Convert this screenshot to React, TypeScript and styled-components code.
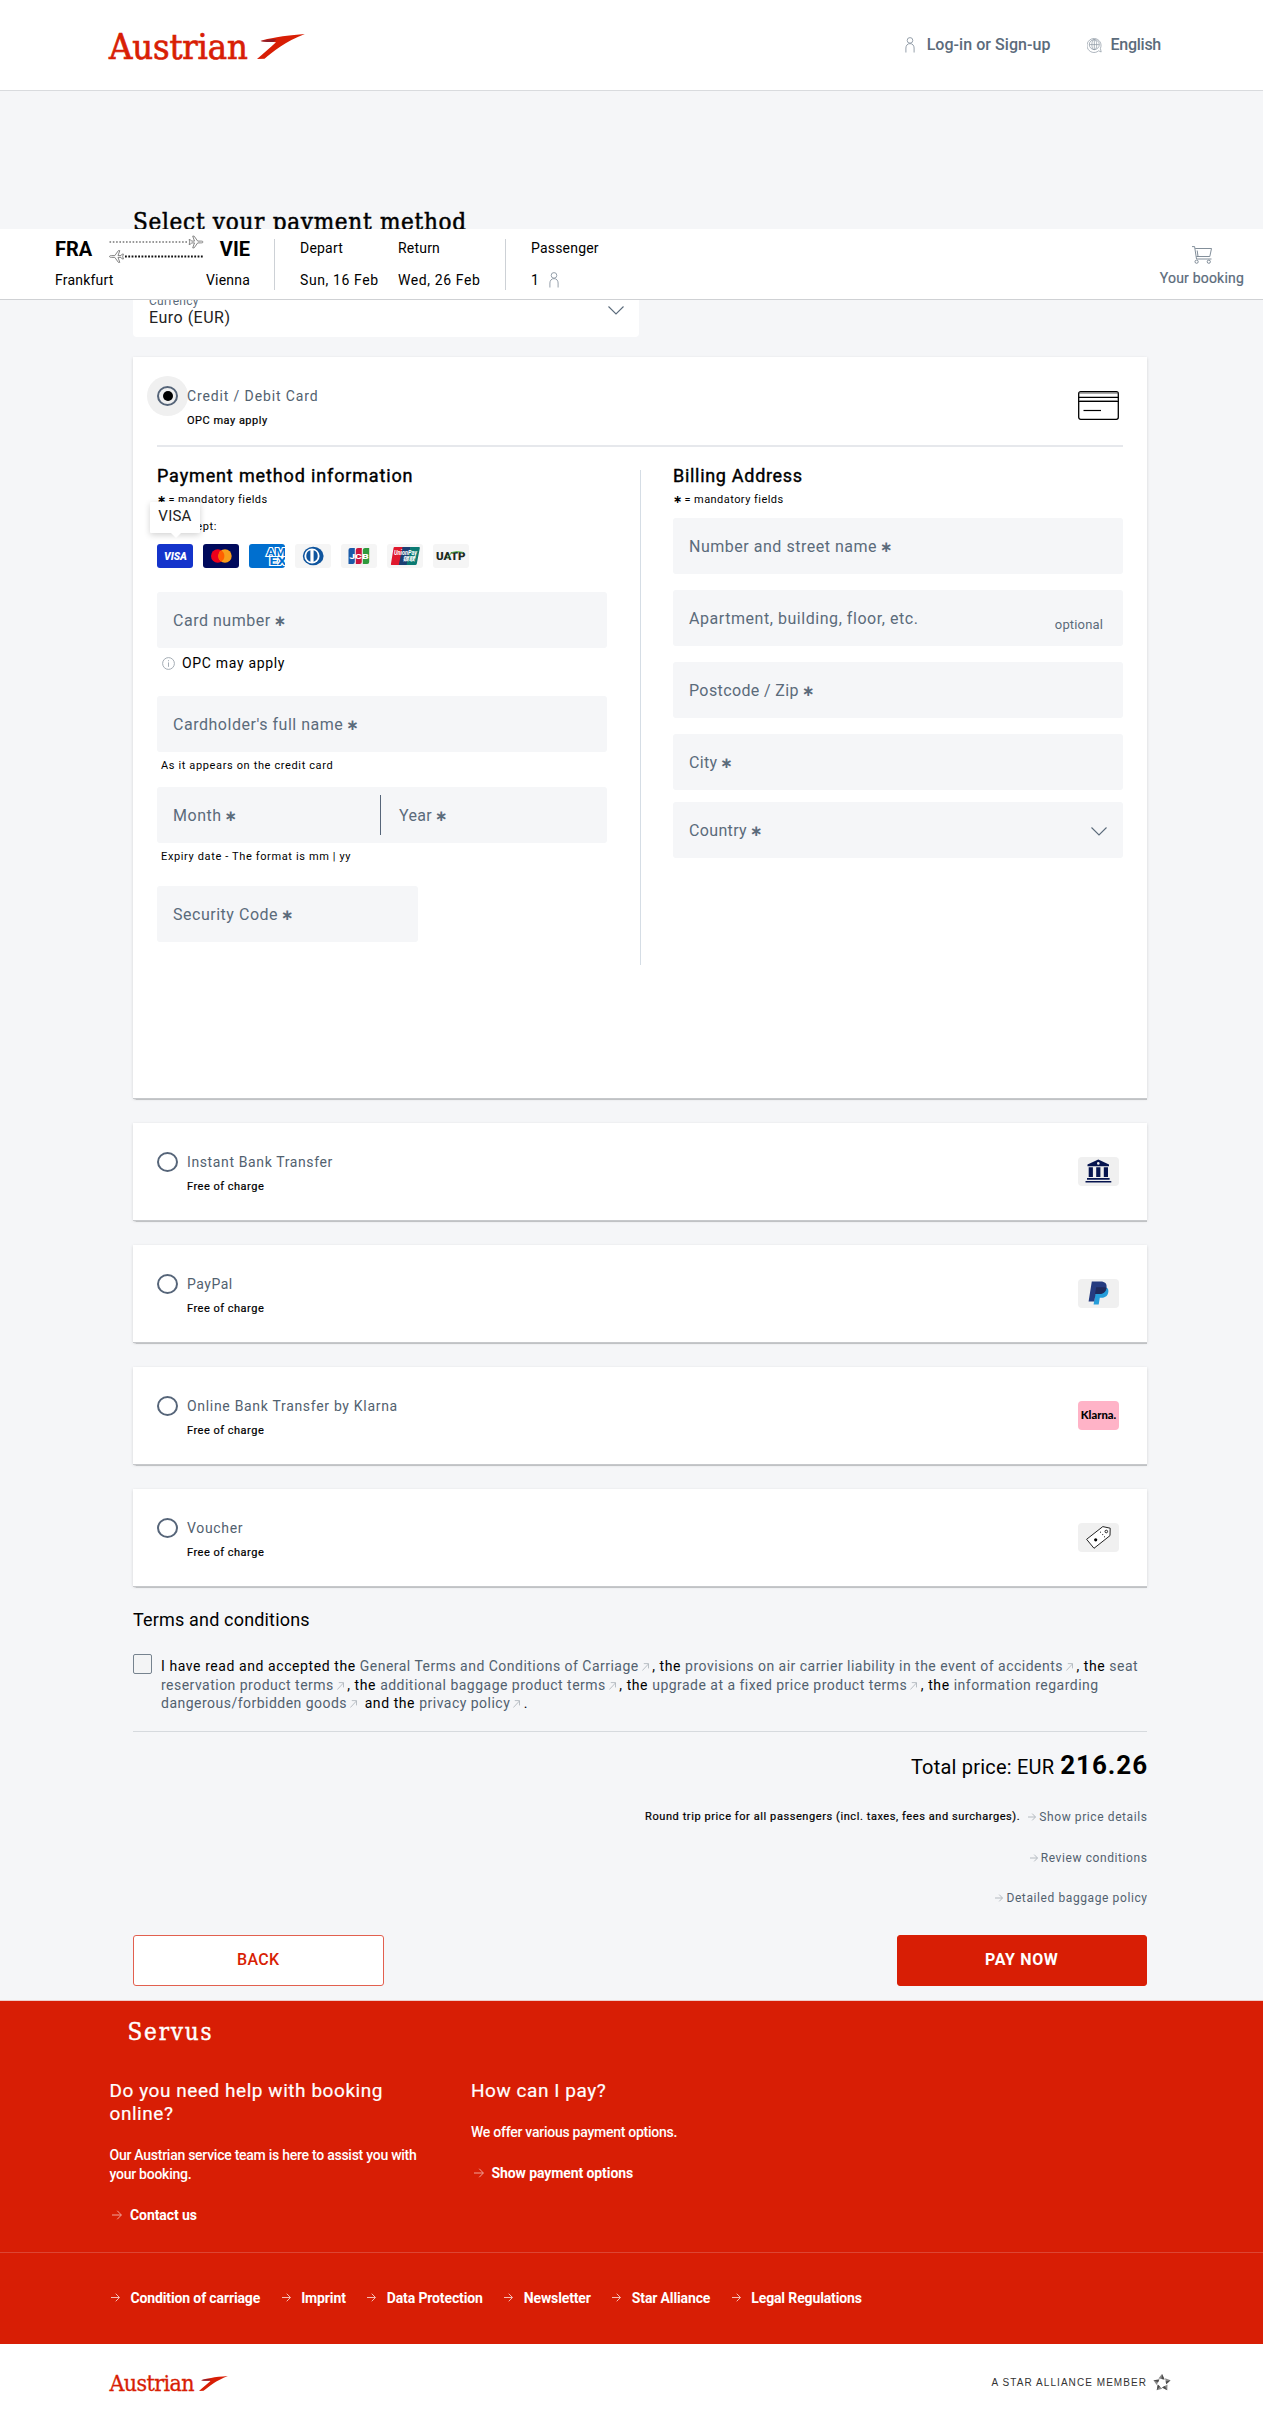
import React from 'react';
import styled, { createGlobalStyle, css } from 'styled-components';

const slate = '#5b6b7b';
const red = '#d81e05';
const sans = "Roboto, 'Noto Sans', sans-serif";
const serif = "'DejaVu Serif Condensed', 'DejaVu Serif', serif";

const type = (size: number, line: number, spacing = 0, weight = 400) => css`
  font-size: ${size}px;
  line-height: ${line}px;
  letter-spacing: ${spacing}px;
  font-weight: ${weight};
`;

const Global = createGlobalStyle`
  *, *::before, *::after { box-sizing: border-box; }
  body { margin: 0; background: #f5f6f8; }
  h1, h2, h3, p { margin: 0; }
  button { font-family: inherit; }
`;

const Page = styled.div`
  position: relative;
  width: 1263px;
  font-family: ${sans};
  color: #000;
  white-space: nowrap;
`;

/* ---------- brand ---------- */

const Brand = styled.div<{ $small?: boolean }>`
  display: flex;
  align-items: flex-start;
  gap: ${p => (p.$small ? 5 : 9)}px;
  color: ${red};
  font-family: ${serif};
  -webkit-text-stroke: ${p => (p.$small ? 0.3 : 0.7)}px ${red};
  ${p => (p.$small ? type(23, 30, -0.62) : type(36, 40, -0.15))}
  svg { margin-top: ${p => (p.$small ? 8 : 7)}px; }
`;

const Swoosh = ({ w, h }: { w: number; h: number }) => (
  <svg width={w} height={h} viewBox="0 0 48 25" preserveAspectRatio="none">
    <path
      d="M3.5 7C11 4.600 25 1.600 47.800 0C38 4 30 8 23.500 12.500C17 17 11.500 21.500 7.500 24.700L0 25C6 19.500 13 14 19 8.200C15 7.600 9 8.600 3.500 7Z"
      fill={red}
    />
    <path d="M3.500 7C9 5.400 14 5 19.500 5.200L16.500 8C12 7.800 8 8.400 3.500 7Z" fill="#7b1c33" opacity=".75" />
  </svg>
);

const Header = styled.header`
  display: flex;
  align-items: flex-start;
  height: 91px;
  padding: 27px 102px 0 109px;
  background: #fff;
  border-bottom: 1px solid #d9dbde;
`;

const HeaderNav = styled.nav`
  display: flex;
  margin: 8px 0 0 auto;
  gap: 37px;
`;

const NavItem = styled.a<{ $gap: number; $ls: number }>`
  display: flex;
  align-items: center;
  gap: ${p => p.$gap}px;
  color: ${slate};
  ${type(16, 20, 0, 500)}
  letter-spacing: ${p => p.$ls}px;
`;

const Person = ({ w = 10, h = 16 }: { w?: number; h?: number }) => (
  <svg width={w} height={h} viewBox="0 0 10 16" fill="none" stroke="#8a95a1" strokeWidth=".9">
    <circle cx="5" cy="3.400" r="2.800" />
    <path d="M.9 15.500V11C.9 8.500 2.500 6.600 5 6.600S9.100 8.500 9.100 11V15.500" />
  </svg>
);

const Globe = () => (
  <svg width="15" height="16" viewBox="0 0 15 16" fill="none" stroke="#8a95a1" strokeWidth=".7">
    <path d="M14.200 15L11.600 13.800A7 7 0 1 1 13.400 11.400Z" />
    <circle cx="7.300" cy="7.600" r="5" />
    <ellipse cx="7.300" cy="7.600" rx="2.400" ry="5" />
    <path d="M7.300 2.600V12.600M2.300 7.600H12.300" />
  </svg>
);

/* ---------- booking bar ---------- */

const BookingBar = styled.section`
  position: absolute;
  z-index: 5;
  top: 229px;
  left: 0;
  width: 100%;
  height: 71px;
  display: flex;
  align-items: flex-start;
  padding: 0 19px 0 55px;
  background: #fff;
  border-bottom: 1px solid #cfd1d4;
`;

const Route = styled.div`
  width: 195px;
  padding-top: 8px;
`;

const RouteRow = styled.div`
  display: flex;
  align-items: center;
  justify-content: space-between;
  height: 24px;
`;

const Airport = styled.strong`
  ${type(20, 24, 0, 700)}
`;

const City = styled.span`
  margin-top: 13px;
  ${type(14, 20, 0.2)}
`;

const Divider = styled.div<{ $left: number }>`
  flex: none;
  width: 1px;
  height: 51px;
  margin: 10px 25px 0 ${p => p.$left}px;
  background: #cdd1d6;
`;

const Fact = styled.div<{ $w?: number }>`
  display: flex;
  flex-direction: column;
  gap: 12px;
  width: ${p => p.$w ?? 80}px;
  padding-top: 9px;
  ${type(14, 20, 0.2)}
`;

const Dates = styled.span`
  display: flex;
  align-items: center;
  gap: 10px;
  letter-spacing: 0.6px;
`;

const CartLink = styled.a`
  display: flex;
  flex-direction: column;
  align-items: center;
  gap: 4px;
  margin-left: auto;
  padding-top: 17px;
  color: ${slate};
  -webkit-text-stroke: 0.2px ${slate};
  ${type(14, 20, 0.2)}
`;

const planePath =
  'M14.500 6.500C14.500 5.700 13.300 5.600 12.300 5.600H9.200L5.600.6H4.200L6 5.600H3L1.700 4H.6L1.300 6.500L.6 9H1.700L3 7.400H6L4.200 12.400H5.600L9.200 7.400H12.300C13.300 7.400 14.500 7.300 14.500 6.500Z';

const Flights = () => (
  <svg width="96" height="28" viewBox="0 0 96 28" fill="none">
    <path d="M1.500 7H80" stroke="#777" strokeWidth="1.600" strokeDasharray="1.600 1.700" />
    <path d="M17 21.500H95" stroke="#111" strokeWidth="1.800" strokeDasharray="1.800 1.500" />
    <path d={planePath} stroke="#777" strokeWidth=".9" transform="translate(80.500 .5)" />
    <path d={planePath} stroke="#777" strokeWidth=".9" transform="translate(16 15) scale(-1 1)" />
  </svg>
);

const Cart = () => (
  <svg width="20" height="18" viewBox="0 0 20 18" fill="none" stroke="#75828f" strokeWidth=".9">
    <path d="M0 .6H2.600L4.500 13H19.500M3.200 2.500H19.500L17.800 10.500H4.400M5.200 4.500L6 10.500" />
    <circle cx="4.600" cy="15.700" r="1.600" />
    <circle cx="16.800" cy="15.700" r="1.600" />
  </svg>
);

/* ---------- main ---------- */

const Main = styled.main`
  width: 1014px;
  margin-left: 133px;
  padding: 115px 0 14px;
`;

const Title = styled.h1`
  font-family: ${serif};
  ${type(24, 32, 0.71)}
  -webkit-text-stroke: 0.5px #000;
`;

const Currency = styled.div`
  display: flex;
  align-items: center;
  justify-content: space-between;
  width: 506px;
  height: 56px;
  margin-top: 43px;
  padding: 3px 15px 0 16px;
  background: #fff;
  border-radius: 4px;
`;

const CurrencyLabel = styled.div`
  color: ${slate};
  ${type(12, 14, 0.3)}
`;

const CurrencyValue = styled.div`
  margin-top: 1px;
  color: #222;
  ${type(16, 18, 0.5)}
`;

const Chevron = () => (
  <svg width="16" height="9" viewBox="0 0 16 9" fill="none" stroke={slate} strokeWidth="1.100">
    <path d="M.5.5L8 8L15.500.5" />
  </svg>
);

const Panel = styled.section<{ $h: number; $mt: number }>`
  height: ${p => p.$h}px;
  margin-top: ${p => p.$mt}px;
  background: #fff;
  box-shadow: 0 1px 0 #c6c8cb, 0 2px 1px -0.5px #c0c2c4, 0 1px 3px rgba(0, 0, 0, 0.14);
`;

const PanelHead = styled.div`
  display: flex;
  align-items: flex-start;
  padding: 0 28px 0 24px;
  height: 88px;
`;

const Radio = styled.span<{ $on?: boolean }>`
  display: grid;
  place-items: center;
  flex: none;
  width: 21px;
  height: 20px;
  margin: 29px 9px 0 0;
  border: 2px solid #566579;
  border-radius: 50%;
  ${p =>
    p.$on &&
    css`
      box-shadow: 0 0 0 10px #f0f0f0;
      background: #f0f0f0;
      &::after {
        content: '';
        width: 10px;
        height: 10px;
        border-radius: 50%;
        background: #000;
      }
    `}
`;

const Method = styled.div`
  padding-top: 29px;
`;

const MethodName = styled.div<{ $ls?: number }>`
  color: #52616f;
  ${type(14, 20)}
  letter-spacing: ${p => p.$ls ?? 0.66}px;
`;

const MethodNote = styled.div`
  margin-top: 7px;
  ${type(11, 16, 0.5)}
  -webkit-text-stroke: 0.2px #000;
`;

const Badge = styled.span<{ $bg?: string }>`
  display: grid;
  place-items: center;
  width: 41px;
  height: 29px;
  margin: 34px 0 0 auto;
  border-radius: 4px;
  background: ${p => p.$bg ?? 'transparent'};
`;

const PanelBody = styled.div`
  display: grid;
  grid-template-columns: 450px 1px 450px;
  justify-content: space-between;
  margin: 0 24px;
  border-top: 2px solid #e6e8ec;
`;

const Column = styled.div`
  padding-top: 17px;
`;

const ColumnRule = styled.div`
  height: 495px;
  margin-top: 23px;
  background: #d5dde5;
`;

const SectionTitle = styled.h2<{ $ls: number }>`
  ${type(18, 24)}
  letter-spacing: ${p => p.$ls}px;
  -webkit-text-stroke: 0.4px #000;
`;

const Mandatory = styled.p<{ $mb?: number }>`
  margin: 4px 0 ${p => p.$mb ?? 0}px;
  ${type(11, 16, 0.45)}
`;

const Star = styled.span<{ $s: number }>`
  display: inline-block;
  font-family: 'DejaVu Sans', sans-serif;
  font-weight: 700;
  font-size: ${p => p.$s}px;
  line-height: 0;
  letter-spacing: -1px;
`;

const Accept = styled.p`
  margin-top: 11px;
  ${type(11, 16, 0.6)}
`;

const Logos = styled.div`
  position: relative;
  display: flex;
  gap: 10px;
  margin: 9px 0 24px;
  svg { display: block; border-radius: 3px; }
`;

const Tooltip = styled.span`
  position: absolute;
  left: -7px;
  bottom: 35px;
  width: 50px;
  height: 31px;
  text-align: center;
  background: #fff;
  color: #222;
  border-radius: 1px;
  box-shadow: 0 2px 6px rgba(0, 0, 0, 0.18);
  ${type(15, 29, 0.25)}
  &::after {
    content: '';
    position: absolute;
    left: 20px;
    bottom: -5px;
    border: 6px solid transparent;
    border-top-color: #fff;
    border-bottom: 0;
  }
`;

const Field = styled.div<{ $w?: number; $mb?: number; $ls?: number }>`
  display: flex;
  align-items: center;
  width: ${p => (p.$w ? p.$w + 'px' : '100%')};
  height: 56px;
  margin-bottom: ${p => p.$mb ?? 0}px;
  padding: 2px 16px 0;
  background: #f5f6f8;
  border-radius: 3px;
  color: ${slate};
  ${type(16, 20)}
  letter-spacing: ${p => p.$ls ?? 0.52}px;
  ${Star} { margin-left: 3px; }
  > svg { margin-left: auto; }
`;

const Optional = styled.span`
  margin: 12px 4px 0 auto;
  ${type(13, 16, 0.15)}
`;

const Info = styled.div`
  display: flex;
  align-items: center;
  gap: 7px;
  margin: 5px 0 23px 5px;
  ${type(14, 20, 0.68)}
`;

const Hint = styled.p<{ $mb: number }>`
  margin: 6px 0 ${p => p.$mb}px 4px;
  ${type(11, 16, 0.63)}
`;

const Expiry = styled.div`
  display: flex;
  align-items: center;
  height: 56px;
  background: #f5f6f8;
  border-radius: 3px;
  ${Field} { background: none; }
`;

const ExpiryRule = styled.i`
  flex: none;
  width: 1px;
  height: 40px;
  margin-right: 2px;
  background: #566579;
`;

const TermsTitle = styled.h2`
  margin-top: 21.700px;
  ${type(18, 24, 0.17)}
`;

const Terms = styled.div`
  display: flex;
  align-items: flex-start;
  gap: 9px;
  padding: 22px 0 18px;
  border-bottom: 1px solid #d6dade;
`;

const Checkbox = styled.span`
  flex: none;
  width: 19px;
  height: 20px;
  border: 1px solid #76838f;
  border-radius: 2px;
  background: #f3f4f5;
`;

const TermsText = styled.p`
  margin-top: 3px;
  ${type(14, 18.6, 0.58)}
`;

const Doc = styled.a`
  color: #52616f;
  letter-spacing: 0.48px;
  svg { margin: 0 3.500px 0 3px; vertical-align: 0; }
`;

const Ext = () => (
  <svg width="7" height="8" viewBox="0 0 7 8" fill="none" stroke="#aab1b8" strokeWidth=".8">
    <path d="M.4 7.500L6.500.9M1.800.6H6.500V5.400" />
  </svg>
);

const DocLink = ({ children }: { children: React.ReactNode }) => (
  <Doc>{children}<Ext /></Doc>
);

const Summary = styled.div`
  display: flex;
  flex-direction: column;
  align-items: flex-end;
`;

const Total = styled.div`
  display: flex;
  align-items: baseline;
  gap: 6px;
  margin-top: 17px;
  ${type(20, 32, 0.2)}
  strong { ${type(26, 32, 0.95, 700)} margin-right: -1px; }
`;

const SummaryRow = styled.div<{ $mt: number }>`
  display: flex;
  align-items: center;
  margin-top: ${p => p.$mt}px;
  height: 20px;
`;

const PriceNote = styled.span`
  margin-right: 8px;
  ${type(11, 20, 0.58)}
  -webkit-text-stroke: 0.2px #000;
`;

const DetailLink = styled.a`
  display: flex;
  align-items: center;
  gap: 3px;
  color: #52616f;
  ${type(12, 20, 0.6)}
  margin-right: -0.6px;
`;

const Arrow = ({ size = 8, color = '#b4bac0' }: { size?: number; color?: string }) => (
  <svg width={size} height={size} viewBox="0 0 8 8" fill="none" stroke={color} strokeWidth={8 / size}>
    <path d="M0 4H7.400M4.200.6L7.500 4L4.200 7.400" />
  </svg>
);

const Actions = styled.div`
  display: flex;
  justify-content: space-between;
  margin-top: 27px;
`;

const Button = styled.button<{ $primary?: boolean }>`
  width: 250.500px;
  height: 51px;
  padding: 0;
  border: 1px solid ${p => (p.$primary ? red : '#e2604f')};
  border-radius: 3px;
  background: ${p => (p.$primary ? red : '#fff')};
  color: ${p => (p.$primary ? '#fff' : red)};
  ${type(16, 20)}
  font-weight: ${p => (p.$primary ? 700 : 500)};
  letter-spacing: ${p => (p.$primary ? 0.65 : 0.3)}px;
`;

/* ---------- footer ---------- */

const Footer = styled.footer`
  border-top: 1px solid #efcdc9;
  background: ${red};
  color: #fff;
`;

const Servus = styled.div`
  padding: 15px 0 0 127.500px;
  font-family: ${serif};
  -webkit-text-stroke: 0.4px #fff;
  ${type(24, 32, 1.79)}
`;

const Help = styled.div`
  display: grid;
  grid-template-columns: 316px 316px;
  column-gap: 45.500px;
  padding: 31px 0 27px 109.500px;
  white-space: normal;
  border-bottom: 1px solid #dd4633;
`;

const HelpTitle = styled.h3`
  ${type(19, 23, 0.55)}
  -webkit-text-stroke: 0.2px #fff;
`;

const HelpText = styled.p`
  margin: 21px 0;
  ${type(14, 19, -0.26, 500)}
`;

const HelpLink = styled.a`
  display: flex;
  align-items: center;
  gap: 8px;
  padding-left: 2.500px;
  ${type(14, 20, -0.09, 700)}
`;

const FooterLinks = styled.div`
  display: flex;
  gap: 21.500px;
  padding: 35px 0 36px 111px;
`;

const FooterLink = styled.a`
  display: flex;
  align-items: center;
  gap: 10.500px;
  ${type(14, 20, -0.13, 700)}
`;

const Bottom = styled.div`
  display: flex;
  justify-content: space-between;
  height: 81px;
  padding: 24px 92px 0 109.500px;
  background: #fff;
`;

const Alliance = styled.div`
  display: flex;
  align-items: center;
  gap: 6px;
  height: 30px;
  color: #333;
  font-family: 'Liberation Sans', sans-serif;
  ${type(10, 14, 1.06)}
`;

const StarMark = () => (
  <svg width="18" height="18" viewBox="-9 -9 18 18">
    {[0, 72, 144, 216, 288].map(a => (
      <g key={a} transform={`rotate(${a})`}>
        <path d="M0 -9L2.600 -3.600L-3.600 -4.400Z" fill="#8b8b8b" />
        <path d="M0 -9L2.600 -3.600L-.4 -4Z" fill="#4d4d4d" />
      </g>
    ))}
  </svg>
);

/* ---------- payment marks ---------- */

const Mark = ({ bg, children }: { bg: string; children: React.ReactNode }) => (
  <svg width="36" height="24" viewBox="0 0 36 24" fontFamily={sans}>
    <rect width="36" height="24" fill={bg} />
    {children}
  </svg>
);

const CardMarks = () => (
  <>
    <Mark bg="#1434cb">
      <text x="7" y="16" fontSize="11" fontWeight="900" fontStyle="italic" fill="#fff" textLength="23" lengthAdjust="spacingAndGlyphs">VISA</text>
    </Mark>
    <Mark bg="#000a5c">
      <circle cx="14.700" cy="12" r="6.700" fill="#eb001b" />
      <circle cx="22" cy="12" r="6.700" fill="#f79e1b" />
      <path d="M18.350 6.400A6.700 6.700 0 0 1 18.350 17.600A6.700 6.700 0 0 1 18.350 6.400Z" fill="#ff5f00" />
    </Mark>
    <Mark bg="#006fcf">
      <g fontSize="11.500" fontWeight="700" fill="#006fcf" stroke="#fff" strokeWidth="2.200" paintOrder="stroke">
        <text x="17.500" y="11.500" textLength="19.500" lengthAdjust="spacingAndGlyphs">AM</text>
        <text x="20.500" y="21.300" textLength="17" lengthAdjust="spacingAndGlyphs">EX</text>
      </g>
    </Mark>
    <Mark bg="#f5f5f5">
      <ellipse cx="18.200" cy="12" rx="10.400" ry="9.200" fill="#0f559e" />
      <circle cx="17" cy="12" r="7.600" fill="#fff" />
      <path d="M15.400 6.300A6 6 0 0 0 15.400 17.700ZM18.600 6.300A6 6 0 0 1 18.600 17.700Z" fill="#0f559e" />
    </Mark>
    <Mark bg="#f5f5f5">
      <path d="M9.500 4H13.800V18Q13.800 20 11.800 20H7.500V6Q7.500 4 9.500 4Z" fill="#1a5aa8" />
      <path d="M17 4H20.800V18Q20.800 20 18.800 20H14.800V6Q14.800 4 17 4Z" fill="#c9163f" />
      <path d="M24 4H28.200V18Q28.200 20 26.200 20H21.800V6Q21.800 4 24 4Z" fill="#2f9a3c" />
      <text x="8.200" y="14.600" fontSize="7.500" fontWeight="900" fill="#fff" textLength="19.500" lengthAdjust="spacingAndGlyphs">JCB</text>
    </Mark>
    <Mark bg="#f5f5f5">
      <path d="M7.500 3H17L13 21H4.600Q3.600 21 4 19.400L6.500 4.200Q6.700 3 7.500 3Z" fill="#e0182d" />
      <path d="M15.500 3H24L20 21H11.800Z" fill="#1b3f73" />
      <path d="M23.500 3H32Q33.100 3 32.800 4.200L29.800 19.800Q29.500 21 28.400 21H19.500Z" fill="#0a7a72" />
      <g fill="#fff" fontWeight="700" fontStyle="italic">
        <text x="7" y="10.500" fontSize="6.500" textLength="23" lengthAdjust="spacingAndGlyphs">UnionPay</text>
        <text x="15.500" y="17.300" fontSize="6.300" fontFamily="'Noto Sans CJK SC', sans-serif" textLength="12.500" lengthAdjust="spacingAndGlyphs">银联</text>
      </g>
    </Mark>
    <Mark bg="#f5f5f5">
      <text x="3" y="16.200" fontSize="11.500" fontWeight="900" fill="#1e2a22" textLength="29.500" lengthAdjust="spacingAndGlyphs">UATP</text>
      <path d="M14 14.500L18.500 8.600Q24 6.600 30 8.400" fill="none" stroke="#4fae4c" strokeWidth="1" />
    </Mark>
  </>
);

const CreditIcon = () => (
  <svg width="41" height="29" viewBox="0 0 41 29" fill="none" stroke="#000">
    <rect x=".7" y=".7" width="39.600" height="27.600" rx="2" strokeWidth="1.300" />
    <path d="M1 2H40" stroke="#555" />
    <path d="M.7 6.400H40.300M.7 10.400H40.300" strokeWidth="1.200" />
    <path d="M1 9.500H40" stroke="#777" strokeWidth=".6" />
    <path d="M5.500 19.500H23" strokeWidth="1.200" />
  </svg>
);

const BankIcon = () => (
  <svg width="27" height="24" viewBox="0 0 27 24" fill="#06144f">
    <path d="M13.300.5L24 5.500V7.300H2.500V5.500Z" />
    <path d="M3.700 8.300H7.900V18H3.700ZM11.200 8.300H15.400V18H11.200ZM18.800 8.300H23V18H18.800ZM2 19H24.600V20.800H2ZM.5 21.900H26.300V23.500H.5Z" />
    <circle cx="13.300" cy="4.400" r="1.300" fill="#f0f0f0" />
  </svg>
);

const PayPalIcon = () => (
  <svg width="21" height="24" viewBox="0 0 21 24">
    <path d="M18.600 6.500C20.400 7.700 20.700 9.700 20.200 11.700C19.400 15.300 16.800 16.700 13.600 16.700H11.800L10.700 23.500H5.600L7.600 11L18.600 6.500Z" fill="#259dda" />
    <path d="M3.800.5H12.500C17 .5 19.200 2.700 18.500 6.800C17.800 11 15 13 11 13H7.600L6.200 20.500H.6Z" fill="#253b80" />
    <path d="M8.200 6.300H16.500Q17.800 6.300 18.500 6.900C17.800 11 15 13 11 13H7Z" fill="#1f2a5c" />
  </svg>
);

const KlarnaIcon = () => (
  <svg width="41" height="29" viewBox="0 0 41 29">
    <text x="2.800" y="18" fontFamily="Lato, sans-serif" fontSize="11.500" fontWeight="900" textLength="35.500" lengthAdjust="spacingAndGlyphs">Klarna.</text>
  </svg>
);

const VoucherIcon = () => (
  <svg width="25" height="23" viewBox="0 0 25 23" fill="none" stroke="#222" strokeWidth="1">
    <path d="M.6 13.300L16.800.6L24.200 2.200L24 9.600L8 22.300Z" fill="#fff" />
    <circle cx="20.300" cy="5.500" r="1.300" />
    <circle cx="9.700" cy="13.800" r="1.600" fill="#000" stroke="none" />
    <path d="M14 6.200H15M16.200 8.600H17.200M18 10.800H19" />
  </svg>
);

const InfoIcon = () => (
  <svg width="13" height="13" viewBox="0 0 13 13" fill="none" stroke="#9aa3ac" strokeWidth=".9">
    <circle cx="6.500" cy="6.500" r="5.900" />
    <path d="M6.500 5.400V9.800M6.500 3.200V4.200" />
  </svg>
);

const otherMethods = [
  { name: 'Instant Bank Transfer', ls: 0.62, bg: '#f0f0f0', icon: <BankIcon /> },
  { name: 'PayPal', ls: 0.5, bg: '#f0f0f0', icon: <PayPalIcon /> },
  { name: 'Online Bank Transfer by Klarna', ls: 0.69, bg: '#ffb3c7', icon: <KlarnaIcon /> },
  { name: 'Voucher', ls: 0.66, bg: '#f0f0f0', icon: <VoucherIcon /> },
];

const footerLinks = ['Condition of carriage', 'Imprint', 'Data Protection', 'Newsletter', 'Star Alliance', 'Legal Regulations'];

const Required = () => <Star $s={15}>∗</Star>;

export default function App() {
  return (
    <Page>
      <Global />
      <Header>
        <Brand>Austrian<Swoosh w={48} h={25} /></Brand>
        <HeaderNav>
          <NavItem $gap={12} $ls={0.05}><Person />Log-in or Sign-up</NavItem>
          <NavItem $gap={8} $ls={-0.25}><Globe />English</NavItem>
        </HeaderNav>
      </Header>

      <BookingBar>
        <Route>
          <RouteRow><Airport>FRA</Airport><Flights /><Airport>VIE</Airport></RouteRow>
          <RouteRow><City>Frankfurt</City><City>Vienna</City></RouteRow>
        </Route>
        <Divider $left={24} />
        <Fact $w={98}><span>Depart</span><Dates>Sun, 16 Feb</Dates></Fact>
        <Fact $w={83}><span>Return</span><Dates>Wed, 26 Feb</Dates></Fact>
        <Divider $left={24} />
        <Fact><span>Passenger</span><Dates>1 <Person /></Dates></Fact>
        <CartLink><Cart />Your booking</CartLink>
      </BookingBar>

      <Main>
        <Title>Select your payment method</Title>
        <Currency>
          <div>
            <CurrencyLabel>Currency</CurrencyLabel>
            <CurrencyValue>Euro (EUR)</CurrencyValue>
          </div>
          <Chevron />
        </Currency>

        <Panel $h={741} $mt={20}>
          <PanelHead>
            <Radio $on />
            <Method>
              <MethodName $ls={0.87}>Credit / Debit Card</MethodName>
              <MethodNote>OPC may apply</MethodNote>
            </Method>
            <Badge><CreditIcon /></Badge>
          </PanelHead>
          <PanelBody>
            <Column>
              <SectionTitle $ls={0.86}>Payment method information</SectionTitle>
              <Mandatory><Star $s={11}>∗</Star> = mandatory fields</Mandatory>
              <Accept>We accept:</Accept>
              <Logos>
                <Tooltip>VISA</Tooltip>
                <CardMarks />
              </Logos>
              <Field>Card number<Required /></Field>
              <Info><InfoIcon />OPC may apply</Info>
              <Field>Cardholder's full name<Required /></Field>
              <Hint $mb={13}>As it appears on the credit card</Hint>
              <Expiry>
                <Field $w={223}>Month<Required /></Field>
                <ExpiryRule />
                <Field $w={224} $ls={0.3}>Year<Required /></Field>
              </Expiry>
              <Hint $mb={21}>Expiry date - The format is mm | yy</Hint>
              <Field $w={261}>Security Code<Required /></Field>
            </Column>
            <ColumnRule />
            <Column>
              <SectionTitle $ls={0.7}>Billing Address</SectionTitle>
              <Mandatory $mb={10}><Star $s={11}>∗</Star> = mandatory fields</Mandatory>
              <Field $mb={16}>Number and street name<Required /></Field>
              <Field $mb={16} $ls={0.55}>Apartment, building, floor, etc.<Optional>optional</Optional></Field>
              <Field $mb={16} $ls={0.38}>Postcode / Zip<Required /></Field>
              <Field $mb={12} $ls={0.3}>City<Required /></Field>
              <Field $ls={0.35}>Country<Required /><Chevron /></Field>
            </Column>
          </PanelBody>
        </Panel>

        {otherMethods.map((m, i) => (
          <Panel key={m.name} $h={97.6} $mt={i === 0 ? 24.7 : 24.4}>
            <PanelHead>
              <Radio />
              <Method>
                <MethodName $ls={m.ls}>{m.name}</MethodName>
                <MethodNote>Free of charge</MethodNote>
              </Method>
              <Badge $bg={m.bg}>{m.icon}</Badge>
            </PanelHead>
          </Panel>
        ))}

        <TermsTitle>Terms and conditions</TermsTitle>
        <Terms>
          <Checkbox />
          <TermsText>
            I have read and accepted the <DocLink>General Terms and Conditions of Carriage</DocLink>, the{' '}
            <DocLink>provisions on air carrier liability in the event of accidents</DocLink>, the <Doc>seat</Doc>
            <br />
            <DocLink>reservation product terms</DocLink>, the <DocLink>additional baggage product terms</DocLink>, the{' '}
            <DocLink>upgrade at a fixed price product terms</DocLink>, the <Doc>information regarding</Doc>
            <br />
            <DocLink>dangerous/forbidden goods</DocLink> and the <DocLink>privacy policy</DocLink>.
          </TermsText>
        </Terms>

        <Summary>
          <Total>Total price: EUR <strong>216.26</strong></Total>
          <SummaryRow $mt={24}>
            <PriceNote>Round trip price for all passengers (incl. taxes, fees and surcharges).</PriceNote>
            <DetailLink><Arrow />Show price details</DetailLink>
          </SummaryRow>
          <SummaryRow $mt={21}><DetailLink><Arrow />Review conditions</DetailLink></SummaryRow>
          <SummaryRow $mt={20}><DetailLink><Arrow />Detailed baggage policy</DetailLink></SummaryRow>
        </Summary>
        <Actions>
          <Button>BACK</Button>
          <Button $primary>PAY NOW</Button>
        </Actions>
      </Main>

      <Footer>
        <Servus>Servus</Servus>
        <Help>
          <div>
            <HelpTitle>Do you need help with booking online?</HelpTitle>
            <HelpText>Our Austrian service team is here to assist you with your booking.</HelpText>
            <HelpLink><Arrow size={10} color="#f0a399" />Contact us</HelpLink>
          </div>
          <div>
            <HelpTitle>How can I pay?</HelpTitle>
            <HelpText>We offer various payment options.</HelpText>
            <HelpLink><Arrow size={10} color="#f0a399" />Show payment options</HelpLink>
          </div>
        </Help>
        <FooterLinks>
          {footerLinks.map(l => (
            <FooterLink key={l}><Arrow size={9} color="#f5bdb5" />{l}</FooterLink>
          ))}
        </FooterLinks>
      </Footer>
      <Bottom>
        <Brand $small>Austrian<Swoosh w={29} h={15} /></Brand>
        <Alliance>A STAR ALLIANCE MEMBER<StarMark /></Alliance>
      </Bottom>
    </Page>
  );
}
